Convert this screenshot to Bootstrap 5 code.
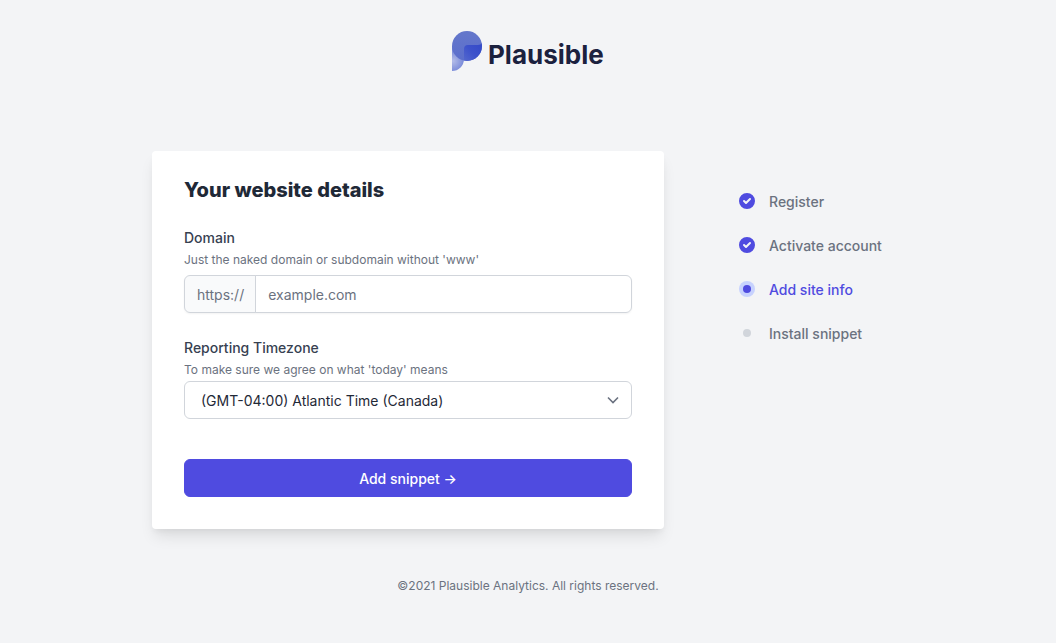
<!DOCTYPE html>
<html lang="en">
<head>
<meta charset="utf-8">
<meta name="viewport" content="width=device-width, initial-scale=1">
<title>Plausible · Add site info</title>
<link href="https://cdn.jsdelivr.net/npm/bootstrap@5.3.0/dist/css/bootstrap.min.css" rel="stylesheet">
<style>
  :root { --indigo: #4f4be0; --line: #d1d5db; --muted: #6b7280; }
  body { background: #f3f4f6; color: #1f2937; font-family: Inter, "Liberation Sans", sans-serif; font-size: 14px; line-height: 20px; }
  .brand-logo { width: 156px; height: 44px; }
  .onboarding { max-width: 752px; margin-top: 79px; }
  .site-form { flex: 0 1 512px; border-radius: 4px; padding: 25px 32px 32px; box-shadow: 0 10px 15px -3px rgba(0,0,0,.1), 0 4px 6px -2px rgba(0,0,0,.05); }
  .site-form h1 { font-size: 20px; line-height: 28px; font-weight: 800; margin-bottom: 24px; }
  .field-label { font-weight: 500; color: #374151; margin-bottom: 2px; }
  .field-hint { font-size: 12px; line-height: 20px; color: var(--muted); }
  .field-control, .field-prefix { height: 38px; font-size: 14px; line-height: 20px; border-color: var(--line); border-radius: 6px; padding: 9px 12px 7px; color: #1f2937; }
  .field-prefix { background: #f9fafb; color: var(--muted); padding: 9px 11px 7px 12px; }
  .url-group .field-control { padding-top: 8px; padding-bottom: 8px; }
  .field-control::placeholder { color: var(--muted); }
  .url-field { margin-bottom: 25px; }
  .url-group { margin-top: 5px; border-radius: 6px; box-shadow: 0 1px 2px rgba(0,0,0,.05); }
  .zone-select { margin-top: 1px; padding-left: 16px; background-position: right 10px center; background-size: 16px;
    background-image: url("data:image/svg+xml,%3Csvg xmlns='http://www.w3.org/2000/svg' viewBox='0 0 16 16'%3E%3Cpath fill='none' stroke='%236b7280' stroke-width='1.6' d='M3 5.5l5 5 5-5'/%3E%3C/svg%3E"); }
  .submit-btn { --bs-btn-bg: var(--indigo); --bs-btn-border-color: var(--indigo); --bs-btn-hover-bg: #4338ca; height: 38px; padding: 9px 16px 7px; font-size: 14px; line-height: 20px; font-weight: 500; border-radius: 6px; margin-top: 40px; }
  .steps { padding: 41px 0 0 73px; gap: 24px; }
  .steps li { gap: 12px; font-weight: 500; color: var(--muted); }
  .steps svg { width: 20px; height: 20px; margin: -1px 0 1px; flex: none; }
  .steps .current { color: var(--indigo); }
  .page-foot { margin-top: 48px; font-size: 12px; line-height: 18px; color: var(--muted); }
</style>
</head>
<body>
<header class="d-flex justify-content-center pt-4">
  <a href="#" class="mt-1 d-block" aria-label="Plausible home">
    <svg class="brand-logo d-block" viewBox="0 0 156 44">
      <defs>
        <radialGradient id="tail" gradientUnits="userSpaceOnUse" cx="3" cy="33" r="13"><stop offset="0" stop-color="#b3bce8"/><stop offset="1" stop-color="#6c7fd5"/></radialGradient>
        <linearGradient id="disc" x1="0" y1="0" x2="0" y2="1"><stop offset="0" stop-color="#6477cb"/><stop offset="1" stop-color="#5b6ecc"/></linearGradient>
        <linearGradient id="overlap" x1="1" y1="0" x2="0" y2="1"><stop offset="0" stop-color="#3349c8"/><stop offset=".5" stop-color="#3d52cb"/><stop offset="1" stop-color="#566ace"/></linearGradient>
        <clipPath id="discClip"><circle cx="17" cy="18" r="15"/></clipPath>
      </defs>
      <path fill="url(#tail)" d="M2 18h12v13a12 12 0 0 1-12 12z"/>
      <circle cx="17" cy="18" r="15" fill="url(#disc)"/>
      <path clip-path="url(#discClip)" fill="url(#overlap)" d="M14 35V21q0-4 4-4h10q3 0 4-2v20z"/>
      <text x="38" y="36" fill="#1b213e" font-family="Inter, sans-serif" font-weight="700" font-size="26">Plausible</text>
    </svg>
  </a>
</header>

<main class="onboarding container-fluid p-0 d-flex align-items-start">
  <form class="site-form bg-white">
    <h1>Your website details</h1>
    <div class="url-field">
      <label class="field-label d-block" for="domain">Domain</label>
      <div class="field-hint" id="domainHint">Just the naked domain or subdomain without 'www'</div>
      <div class="input-group url-group">
        <span class="input-group-text field-prefix">https://</span>
        <input class="form-control field-control" id="domain" type="text" placeholder="example.com" aria-describedby="domainHint">
      </div>
    </div>
    <div>
      <label class="field-label d-block" for="timezone">Reporting Timezone</label>
      <div class="field-hint" id="zoneHint">To make sure we agree on what 'today' means</div>
      <select class="form-select field-control zone-select" id="timezone" aria-describedby="zoneHint">
        <option>(GMT-04:00) Atlantic Time (Canada)</option>
      </select>
    </div>
    <button type="submit" class="btn btn-primary submit-btn w-100">Add snippet →</button>
  </form>

  <ol class="steps list-unstyled d-flex flex-column mb-0">
    <li class="d-flex"><svg viewBox="0 0 20 20" fill="#4f4be0"><path fill-rule="evenodd" d="M10 18a8 8 0 100-16 8 8 0 000 16zm3.707-9.293a1 1 0 00-1.414-1.414L9 10.586 7.707 9.293a1 1 0 00-1.414 1.414l2 2a1 1 0 001.414 0l4-4z"/></svg>Register</li>
    <li class="d-flex"><svg viewBox="0 0 20 20" fill="#4f4be0"><path fill-rule="evenodd" d="M10 18a8 8 0 100-16 8 8 0 000 16zm3.707-9.293a1 1 0 00-1.414-1.414L9 10.586 7.707 9.293a1 1 0 00-1.414 1.414l2 2a1 1 0 001.414 0l4-4z"/></svg>Activate account</li>
    <li class="d-flex current" aria-current="step"><svg viewBox="0 0 20 20"><circle cx="10" cy="10" r="8" fill="#c7d2fe"/><circle cx="10" cy="10" r="4" fill="#4f4be0"/></svg>Add site info</li>
    <li class="d-flex"><svg viewBox="0 0 20 20"><circle cx="10" cy="10" r="4" fill="#d1d5db"/></svg>Install snippet</li>
  </ol>
</main>

<footer class="page-foot text-center">©2021 Plausible Analytics. All rights reserved.</footer>
<script src="https://cdn.jsdelivr.net/npm/bootstrap@5.3.0/dist/js/bootstrap.bundle.min.js"></script>
</body>
</html>
